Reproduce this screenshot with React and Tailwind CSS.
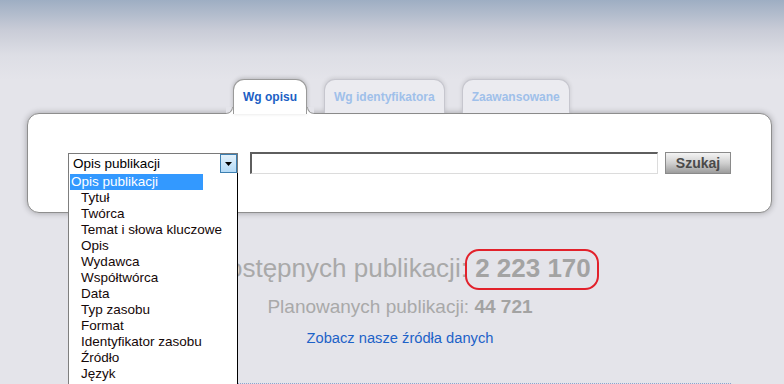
const options = [
  "Tytuł",
  "Twórca",
  "Temat i słowa kluczowe",
  "Opis",
  "Wydawca",
  "Współtwórca",
  "Data",
  "Typ zasobu",
  "Format",
  "Identyfikator zasobu",
  "Źródło",
  "Język",
];

const tabs = [
  { label: "Wg opisu", active: true },
  { label: "Wg identyfikatora" },
  { label: "Zaawansowane" },
];

export default function App() {
  return (
    <div className="relative w-[784px] h-[384px] overflow-hidden bg-[#e4e4ea] bg-[linear-gradient(to_bottom,#9eaec3_0px,#c9ccd7_30px,#dddee5_55px,#e4e4ea_80px)] bg-no-repeat font-['Liberation_Sans',Arial,sans-serif]">
      {/* tabs */}
      <div className="flex items-end gap-[17px] pl-[233px] pt-[79px] relative z-10">
        {tabs.map((t) =>
          t.active ? (
            <div
              key={t.label}
              className="relative h-[35px] -mb-px flex items-center px-[9px] bg-white border border-b-0 border-[#9a9a9a] rounded-t-[11px] shadow-[0_-1px_4px_rgba(0,0,0,0.2)] text-[12px] font-bold text-[#1d5fc4]"
            >
              {t.label}
              {/* bottom flares */}
              <span className="absolute -left-[8px] bottom-0 w-[7px] h-[7px] bg-white">
                <span className="block w-full h-full bg-[#e4e4ea] border-r border-b border-[#9a9a9a] rounded-br-[7px]" />
              </span>
              <span className="absolute -right-[8px] bottom-0 w-[7px] h-[7px] bg-white">
                <span className="block w-full h-full bg-[#e4e4ea] border-l border-b border-[#9a9a9a] rounded-bl-[7px]" />
              </span>
            </div>
          ) : (
            <div
              key={t.label}
              className="h-[34px] flex items-center px-[9px] bg-[#ebebf0] border border-b-0 border-[#c6c6ce] rounded-t-[11px] shadow-[0_-1px_4px_rgba(0,0,0,0.12)] text-[12px] font-bold text-[#9fc0ea]"
            >
              {t.label}
            </div>
          )
        )}
      </div>

      {/* search card */}
      <div className="ml-[27px] w-[745px] h-[100px] bg-white border border-[#8e8e8e] rounded-[12px] shadow-[0_0_6px_rgba(0,0,0,0.3)] flex items-start pt-[38px] pl-[40px]">
        <div className="mt-px w-[170px] h-[21px] border border-[#7a7a7a] bg-white flex items-center justify-between">
          <span className="pl-[4px] text-[13.5px] text-black leading-none">Opis publikacji</span>
          <span className="w-[17px] h-[19px] border border-[#3c7fb1] bg-[linear-gradient(to_bottom,#e3f1fb,#b4daf6)] flex items-center justify-center">
            <svg width="7" height="4" viewBox="0 0 7 4">
              <path d="M0 0h7L3.5 4z" fill="#000" />
            </svg>
          </span>
        </div>
        <div className="ml-[12px] w-[408px] h-[22px] border-t-2 border-l-2 border-t-[#5e5e5e] border-l-[#5e5e5e] border-r border-b border-r-[#dcdcdc] border-b-[#dcdcdc] bg-white" />
        <button className="ml-[7px] w-[66px] h-[22px] border border-[#8a8a8a] bg-[linear-gradient(to_bottom,#f4f4f4,#d0d0d0_50%,#9c9c9c)] text-[14px] font-bold text-[#4a4a4a] leading-none">
          Szukaj
        </button>
      </div>

      {/* stats */}
      <div className="flex flex-col items-center pl-[16px]">
        <div className="mt-[40px] h-[30px] leading-[30px] text-[26px] text-[#a9a9a9]">
          Dostępnych publikacji:{" "}
          <span className="relative font-bold text-[#a3a3a3]">
            2 223 170
            <span className="absolute -left-[10px] -right-[8px] -top-[4px] -bottom-[7px] border-2 border-[#e2212b] rounded-[14px]" />
          </span>
        </div>
        <div className="mt-[12px] h-[24px] leading-[24px] text-[19px] text-[#a9a9a9]">
          Planowanych publikacji: <span className="font-bold text-[#a3a3a3]">44 721</span>
        </div>
        <div className="mt-[9px] h-[20px] leading-[20px] text-[14.7px] text-[#1d62c8]">
          Zobacz nasze źródła danych
        </div>
      </div>
      <div className="ml-[68px] mt-[35px] w-[663px] border-t border-dotted border-[#8aa3cf]" />

      {/* open select list */}
      <div className="absolute left-[68px] top-[173px] w-[170px] h-[230px] pt-px bg-white border-l border-l-[#7f7f7f] border-r border-r-black border-b border-b-black z-20">
        <div className="ml-px w-[133px] h-[16px] bg-[#3399ff] text-white text-[13.5px] leading-[16px] pl-px">
          Opis publikacji
        </div>
        {options.map((o) => (
          <div key={o} className="h-[16px] leading-[16px] pl-[12px] text-[13.5px] text-[#150808]">
            {o}
          </div>
        ))}
      </div>
    </div>
  );
}
